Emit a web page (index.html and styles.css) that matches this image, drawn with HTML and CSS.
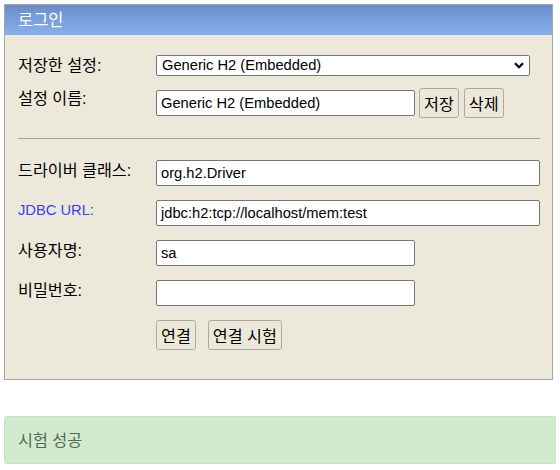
FILE: index.html
```html
<!DOCTYPE html>
<html lang="ko">
<head>
<meta charset="utf-8">
<title>H2 Console</title>
<link rel="stylesheet" href="styles.css">
</head>
<body>
<div class="panel">
  <div class="panel-head">로그인</div>
  <div class="panel-body">
    <div class="row row-select">
      <div class="label">저장한 설정:</div>
      <div class="select">
        <span>Generic H2 (Embedded)</span>
        <svg class="chev" width="10" height="7" viewBox="0 0 10 7"><path d="M1 1.2 L5 5.2 L9 1.2" fill="none" stroke="#000" stroke-width="2.2"/></svg>
      </div>
    </div>
    <div class="row row-name">
      <div class="label">설정 이름:</div>
      <div class="controls">
        <div class="input short">Generic H2 (Embedded)</div>
        <button class="btn">저장</button>
        <button class="btn">삭제</button>
      </div>
    </div>
    <div class="rule"></div>
    <div class="row">
      <div class="label">드라이버 클래스:</div>
      <div class="input wide">org.h2.Driver</div>
    </div>
    <div class="row">
      <div class="label link">JDBC URL:</div>
      <div class="input wide">jdbc:h2:tcp://localhost/mem:test</div>
    </div>
    <div class="row">
      <div class="label">사용자명:</div>
      <div class="input short">sa</div>
    </div>
    <div class="row">
      <div class="label">비밀번호:</div>
      <div class="input short"></div>
    </div>
    <div class="row row-actions">
      <div class="label"></div>
      <div class="actions">
        <button class="btn">연결</button>
        <button class="btn">연결 시험</button>
      </div>
    </div>
  </div>
</div>
<div class="alert">시험 성공</div>
</body>
</html>
```
FILE: styles.css
```css
html { overflow: hidden; }
body {
  margin: 4px;
  font-family: "Liberation Sans", "Noto Sans CJK KR", sans-serif;
  font-size: 16.2px;
  color: #000;
  background: #fff;
}
.panel {
  width: 547px;
  border: 1px solid #a9a69a;
  background: #ece9da;
}
.panel-head {
  height: 30px;
  line-height: 30px;
  padding-left: 13px;
  color: #fff;
  font-size: 16.5px;
  background: linear-gradient(#6a8cca, #86b1ec);
}
.panel-body {
  padding: 20px 12px 29px 13px;
}
.row {
  display: grid;
  grid-template-columns: 138px 1fr;
  align-items: start;
  margin-bottom: 14px;
}
.label {
  line-height: 20px;
  height: 20px;
  white-space: nowrap;
}
.link { color: #3c3cff; font-size: 14.7px; }
.row-select { margin-bottom: 12px; }
.row-name { margin-bottom: 20px; }
.controls {
  display: flex;
  align-items: center;
  height: 30px;
}
.select {
  width: 374px;
  height: 21px;
  box-sizing: border-box;
  border: 1px solid #767676;
  border-radius: 2px;
  background: #fff;
  display: flex;
  align-items: center;
  justify-content: space-between;
  padding: 0 5px 0 5px;
  line-height: 19px;
  font-size: 14.7px;
}
.chev { display: block; }
.input {
  height: 26px;
  box-sizing: border-box;
  border: 1px solid #767676;
  border-radius: 2px;
  background: #fff;
  padding: 0 4px;
  line-height: 24px;
  white-space: nowrap;
  overflow: hidden;
  font-size: 14.7px;
}
.wide { width: 384px; }
.short { width: 259px; }
.controls .input { margin-right: 4px; }
.btn {
  font: inherit;
  height: 30px;
  padding: 0 4px;
  border: 1px solid #adab9f;
  border-radius: 3px;
  background: #ece9da;
  color: #000;
  margin-right: 5px;
}
.rule {
  height: 1px;
  background: #a6a49a;
  margin: 0 0 21px 0;
}
.row-actions { margin-bottom: 0; }
.actions {
  display: flex;
  gap: 12px;
}
.actions .btn { margin-right: 0; height: 30px; }
.alert {
  margin: 36px -4px 0 0;
  height: 48px;
  box-sizing: border-box;
  border: 1px solid #c2e3c5;
  border-right: 0;
  border-radius: 4px 0 0 4px;
  background: #d2ebcf;
  color: #4f6a4f;
  padding-left: 13px;
  line-height: 46px;
}
```
